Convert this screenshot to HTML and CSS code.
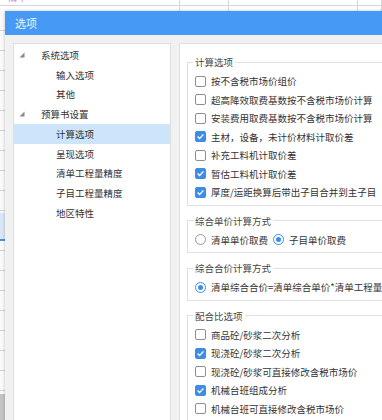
FILE: index.html
```html
<!DOCTYPE html>
<html lang="zh-CN">
<head>
  <meta charset="UTF-8" />
  <title>选项</title>
  <link rel="stylesheet" href="styles.css">
</head>
<body>

  <!-- sheet behind the dialog -->
  <div class="sheet">
    <div class="sheet-row">
      <div class="cell c1"><span class="cut">清单</span></div>
      <div class="cell c2"></div>
      <div class="cell c3"></div>
      <div class="cell c4"></div>
    </div>
    <div class="sheet-row">
      <div class="cell c1"></div>
      <div class="cell c2"></div>
      <div class="cell c3"></div>
      <div class="cell c4"></div>
    </div>
  </div>
  <div class="sheet-left">
    <div class="sel-band"></div>
    <div class="gray-band"></div>
    <div class="tan-band"></div>
  </div>

  <div class="dialog">
    <div class="title">选项</div>
    <div class="dialog-body">

      <div class="tree">
        <div class="node lv1"><svg class="arrow" width="6" height="6" viewBox="0 0 6 6"><polygon points="5.5,0.5 5.5,5.5 0.5,5.5" /></svg>系统选项</div>
        <div class="node lv2">输入选项</div>
        <div class="node lv2">其他</div>
        <div class="node lv1"><svg class="arrow" width="6" height="6" viewBox="0 0 6 6"><polygon points="5.5,0.5 5.5,5.5 0.5,5.5" /></svg>预算书设置</div>
        <div class="node lv2 selected">计算选项</div>
        <div class="node lv2">呈现选项</div>
        <div class="node lv2">清单工程量精度</div>
        <div class="node lv2">子目工程量精度</div>
        <div class="node lv2">地区特性</div>
      </div>

      <div class="panel">
        <fieldset class="group">
          <legend>计算选项</legend>
          <div class="row"><span class="box"></span>按不含税市场价组价</div>
          <div class="row"><span class="box"></span>超高降效取费基数按不含税市场价计算</div>
          <div class="row"><span class="box"></span>安装费用取费基数按不含税市场价计算</div>
          <div class="row"><span class="box checked"><svg width="11" height="11" viewBox="0 0 11 11"><path d="M2.6 5.6 L4.6 7.6 L8.4 3.4" /></svg></span>主材，设备，未计价材料计取价差</div>
          <div class="row"><span class="box"></span>补充工料机计取价差</div>
          <div class="row"><span class="box checked"><svg width="11" height="11" viewBox="0 0 11 11"><path d="M2.6 5.6 L4.6 7.6 L8.4 3.4" /></svg></span>暂估工料机计取价差</div>
          <div class="row"><span class="box checked"><svg width="11" height="11" viewBox="0 0 11 11"><path d="M2.6 5.6 L4.6 7.6 L8.4 3.4" /></svg></span>厚度/运距换算后带出子目合并到主子目</div>
        </fieldset>

        <fieldset class="group">
          <legend>综合单价计算方式</legend>
          <div class="row">
            <span class="radio"></span>清单单价取费
            <span class="radio on second"></span>子目单价取费
          </div>
        </fieldset>

        <fieldset class="group">
          <legend>综合合价计算方式</legend>
          <div class="row"><span class="radio on"></span>清单综合合价=清单综合单价*清单工程量</div>
        </fieldset>

        <fieldset class="group">
          <legend>配合比选项</legend>
          <div class="row"><span class="box"></span>商品砼/砂浆二次分析</div>
          <div class="row"><span class="box checked"><svg width="11" height="11" viewBox="0 0 11 11"><path d="M2.6 5.6 L4.6 7.6 L8.4 3.4" /></svg></span>现浇砼/砂浆二次分析</div>
          <div class="row"><span class="box"></span>现浇砼/砂浆可直接修改含税市场价</div>
          <div class="row"><span class="box checked"><svg width="11" height="11" viewBox="0 0 11 11"><path d="M2.6 5.6 L4.6 7.6 L8.4 3.4" /></svg></span>机械台班组成分析</div>
          <div class="row"><span class="box"></span>机械台班可直接修改含税市场价</div>
        </fieldset>
      </div>

    </div>
  </div>

</body>
</html>
```

FILE: styles.css
```css
html, body {
  margin: 0;
  height: 100%;
  overflow: hidden;
}
body {
  font-family: "Noto Sans CJK SC", "Noto Sans", sans-serif;
  font-size: 9.5px;
  color: #333;
  background: #fff;
}

/* sheet in the background */
.sheet-row {
  display: flex;
  height: 5px;
  border-bottom: 1px solid #d6d6d6;
}
.cell {
  border-right: 1px solid #d6d6d6;
  overflow: hidden;
}
.c1 { width: 179px; }
.c2 { width: 48px; }
.c3 { width: 128px; }
.c4 { flex: 1; }
.cut {
  display: block;
  margin: -9px 0 0 8px;
  line-height: 12px;
  color: #c77be0;
}
.sheet-left {
  position: absolute;
  left: 0;
  top: 11px;
  width: 5px;
  height: 409px;
  background: repeating-linear-gradient(#fafafa 0, #fafafa 19px, #d4d4d4 19px, #d4d4d4 20px);
}
.sel-band {
  margin-top: 202px;
  height: 26px;
  background: #d9e6f7;
  border-bottom: 2px solid #4d8fdf;
}
.gray-band {
  margin-top: 153px;
  height: 45px;
  background: #c4c4c4;
}
.tan-band {
  height: 3px;
  background: #f0d3a8;
}

/* dialog */
.dialog {
  position: absolute;
  left: 5px;
  top: 11px;
  width: 400px;
  height: 420px;
  background: #f1f1f1;
  box-shadow: 0 0 3px rgba(0,0,0,0.25);
}
.title {
  height: 24px;
  line-height: 24px;
  padding-left: 10px;
  background: #4699f4;
  color: #eef5ff;
  font-size: 11px;
}
.dialog-body {
  display: flex;
  gap: 8px;
  padding: 8px 0 0 8px;
  height: 100%;
}

/* left tree */
.tree {
  width: 156px;
  flex-shrink: 0;
  background: #fff;
  border: 1px solid #dedede;
  padding-top: 1px;
}
.node {
  display: flex;
  align-items: center;
  height: 19.75px;
  white-space: nowrap;
}
.lv1 { padding-left: 5px; }
.lv2 { padding-left: 42px; }
.arrow {
  fill: #8a8a8a;
  margin-right: 16px;
}
.selected {
  background: #cce5fa;
}

/* right panel */
.panel {
  flex: 1;
  background: #fff;
  border: 1px solid #dedede;
  padding: 11px 0 0 7px;
  min-width: 0;
}
.group {
  margin: 0 0 8px;
  padding: 3px 0 3px 7px;
  border: 1px solid #dfdfdf;
  border-right: none;
  min-width: 0;
}
.group legend {
  padding: 0 2px;
  margin-left: -2px;
  line-height: 14px;
  color: #444;
}
.row {
  display: flex;
  align-items: center;
  height: 18.5px;
  white-space: nowrap;
}
.box {
  width: 9px;
  height: 9px;
  border: 1px solid #8e8e8e;
  border-radius: 2px;
  margin-right: 5px;
  flex-shrink: 0;
  background: #fff;
}
.box svg {
  display: block;
  margin: -1px 0 0 -1px;
}
.box.checked {
  background: #3c8de6;
  border-color: #3c8de6;
}
.box.checked path {
  fill: none;
  stroke: #fff;
  stroke-width: 1.4;
}
.radio {
  width: 9px;
  height: 9px;
  border: 1px solid #9a9a9a;
  border-radius: 50%;
  margin-right: 5px;
  flex-shrink: 0;
  display: flex;
  align-items: center;
  justify-content: center;
}
.radio.on {
  border-color: #3c8de6;
}
.radio.on::after {
  content: "";
  width: 5px;
  height: 5px;
  border-radius: 50%;
  background: #3c8de6;
}
.radio.second {
  margin-left: 5px;
}
```
